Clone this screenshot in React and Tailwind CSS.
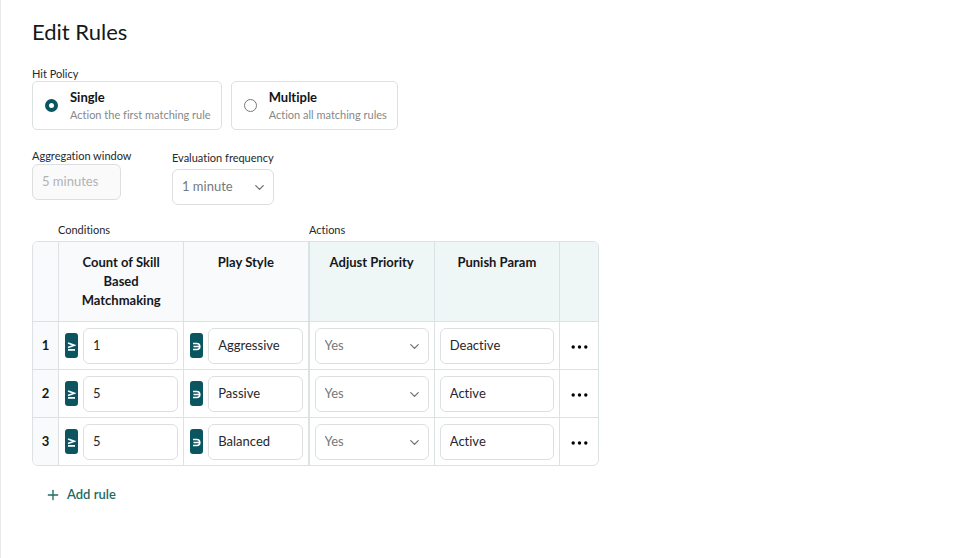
import { useState } from "react";
import { ChevronDown, Plus } from "lucide-react";

const RULES = [
  { count: "1", style: "Aggressive", punish: "Deactive" },
  { count: "5", style: "Passive", punish: "Active" },
  { count: "5", style: "Balanced", punish: "Active" },
];

const fieldClass =
  "block h-9 w-full min-w-0 rounded-md border border-[#dcdfe0] bg-white px-[9px] pb-[2px] text-[13px] text-[#25282c] outline-none focus:border-[#0b5560]";

function PolicyOption({ value, title, description, selected, onSelect }) {
  return (
    <label className="flex h-[49px] cursor-pointer items-center gap-3 rounded-[5px] border border-[#dbe1e3] pr-[10px] pl-3">
      <input
        type="radio"
        name="hit-policy"
        value={value}
        checked={selected}
        onChange={() => onSelect(value)}
        className="size-[13px] shrink-0 appearance-none rounded-full border border-[#75797c] bg-white checked:border-4 checked:border-[#0b5560]"
      />
      <span className="flex flex-col">
        <span className="text-[13px] leading-[17px] font-bold text-[#111417]">{title}</span>
        <span className="text-[11px] leading-[17px] whitespace-nowrap text-[#858889]">{description}</span>
      </span>
    </label>
  );
}

function SelectField({ id, label, options }) {
  return (
    <div className="relative w-full">
      <select
        id={id}
        aria-label={label}
        className="block h-9 w-full appearance-none rounded-md border border-[#dcdfe0] bg-white pr-7 pl-[9px] text-[13px] text-[#75797c] outline-none"
      >
        {options.map((option) => (
          <option key={option}>{option}</option>
        ))}
      </select>
      <ChevronDown className="pointer-events-none absolute top-[11px] right-[7px] size-[15px] text-[#6b7073]" strokeWidth={2} />
    </div>
  );
}

function OperatorButton({ kind }) {
  return (
    <button
      type="button"
      aria-label={kind === "gte" ? "Greater than or equal" : "Contains"}
      className="flex h-[25px] w-[13px] shrink-0 items-center justify-center rounded-[3px] bg-[#0b5560] pt-[2px] text-white"
    >
      <svg viewBox="0 0 9 9" className="size-[9px]" fill="none" stroke="currentColor" strokeWidth="1.6">
        {kind === "gte" ? (
          <path d="M1 0.9 L7.2 3.2 L1 5.5 M1 7.9 H8" />
        ) : (
          <path d="M1 1.5 H4.8 A3 3 0 0 1 4.8 7.5 H1 M1.5 4.5 H7.5" />
        )}
      </svg>
    </button>
  );
}

export default function App() {
  const [policy, setPolicy] = useState("single");

  return (
    <main className="min-h-screen border-l border-[#e6e8e9] bg-white px-[31px] pt-[18px] pb-10 font-[Lato,'Open_Sans',sans-serif] text-[#25282c] [font-variant-ligatures:none]">
      <h1 className="text-[22px] leading-7 text-[#15181b]">Edit Rules</h1>

      <fieldset className="mt-5">
        <legend className="text-[11px] leading-[15px]">Hit Policy</legend>
        <div className="flex flex-wrap gap-[9px]">
          <PolicyOption
            value="single"
            title="Single"
            description="Action the first matching rule"
            selected={policy === "single"}
            onSelect={setPolicy}
          />
          <PolicyOption
            value="multiple"
            title="Multiple"
            description="Action all matching rules"
            selected={policy === "multiple"}
            onSelect={setPolicy}
          />
        </div>
      </fieldset>

      <div className="mt-[18px] flex items-start gap-[51px]">
        <div className="w-[89px]">
          <label htmlFor="window" className="block text-[11px] leading-4 whitespace-nowrap">
            Aggregation window
          </label>
          <input
            id="window"
            disabled
            defaultValue="5 minutes"
            className="block h-9 w-full rounded-md border border-[#dcdfe0] bg-[#fafafa] px-[9px] pb-[2px] text-[13px] text-[#b0b3b4]"
          />
        </div>
        <div className="w-[102px]">
          <label htmlFor="frequency" className="block pt-[2px] pb-[3px] text-[11px] leading-4 whitespace-nowrap">
            Evaluation frequency
          </label>
          <SelectField id="frequency" options={["1 minute", "5 minutes"]} />
        </div>
      </div>

      <section className="mt-4 w-[567px] max-w-full">
        <div className="flex h-5 text-[11px] leading-[17px]">
          <span className="w-[277px] pl-[26px]">Conditions</span>
          <span>Actions</span>
        </div>
        <div className="overflow-hidden rounded-md border border-[#dce1e3]">
          <table className="w-full table-fixed border-separate border-spacing-0 text-[13px]">
            <colgroup>
              <col className="w-[26px]" />
              <col />
              <col />
              <col />
              <col />
              <col className="w-[38px]" />
            </colgroup>
            <thead>
              <tr className="h-20 align-top leading-[19px] text-[#15181b] [&>*]:border-b [&>*]:border-[#dce1e3] [&>*]:pt-[11px] [&>*]:pb-[11px]">
                <td className="border-r bg-[#f9fafc]" />
                <th scope="col" className="border-r bg-[#f9fafc] px-5 font-bold">Count of Skill Based Matchmaking</th>
                <th scope="col" className="border-r-2 bg-[#f9fafc] font-bold">Play Style</th>
                <th scope="col" className="border-r bg-[#eff6f6] font-bold">Adjust Priority</th>
                <th scope="col" className="border-r bg-[#eff6f6] font-bold">Punish Param</th>
                <td className="bg-[#eff6f6]" />
              </tr>
            </thead>
            <tbody>
              {RULES.map((rule, index) => (
                <tr key={index} className="h-12 last:h-[47px] [&:last-child>*]:border-b-0 [&>*]:border-b [&>*]:border-[#dce1e3] [&>*]:py-0">
                  <th scope="row" className="border-r bg-[#f9fafc] font-bold text-[#15181b]">{index + 1}</th>
                  <td className="border-r pr-[5px] pl-[6px]">
                    <div className="flex items-center gap-[5px]">
                      <OperatorButton kind="gte" />
                      <input aria-label={`Rule ${index + 1} skill count`} defaultValue={rule.count} className={fieldClass} />
                    </div>
                  </td>
                  <td className="border-r-2 pr-[5px] pl-[6px]">
                    <div className="flex items-center gap-[5px]">
                      <OperatorButton kind="contains" />
                      <input aria-label={`Rule ${index + 1} play style`} defaultValue={rule.style} className={fieldClass} />
                    </div>
                  </td>
                  <td className="border-r px-[5px]">
                    <SelectField label={`Rule ${index + 1} adjust priority`} options={["Yes", "No"]} />
                  </td>
                  <td className="border-r px-[5px]">
                    <input aria-label={`Rule ${index + 1} punish param`} defaultValue={rule.punish} className={fieldClass} />
                  </td>
                  <td>
                    <button type="button" aria-label={`Rule ${index + 1} options`} className="flex h-9 w-full items-center justify-center pt-[2px]">
                      <svg viewBox="0 0 17 4" className="h-1 w-[17px]" fill="#000">
                        <circle cx="2.2" cy="2" r="1.7" />
                        <circle cx="8.5" cy="2" r="1.7" />
                        <circle cx="14.8" cy="2" r="1.7" />
                      </svg>
                    </button>
                  </td>
                </tr>
              ))}
            </tbody>
          </table>
        </div>
      </section>

      <button type="button" className="mt-[19px] ml-[13px] flex h-5 items-center gap-[6px] text-[13px] font-semibold text-[#1d6b63]">
        <Plus className="size-4" strokeWidth={2} />
        Add rule
      </button>
    </main>
  );
}
